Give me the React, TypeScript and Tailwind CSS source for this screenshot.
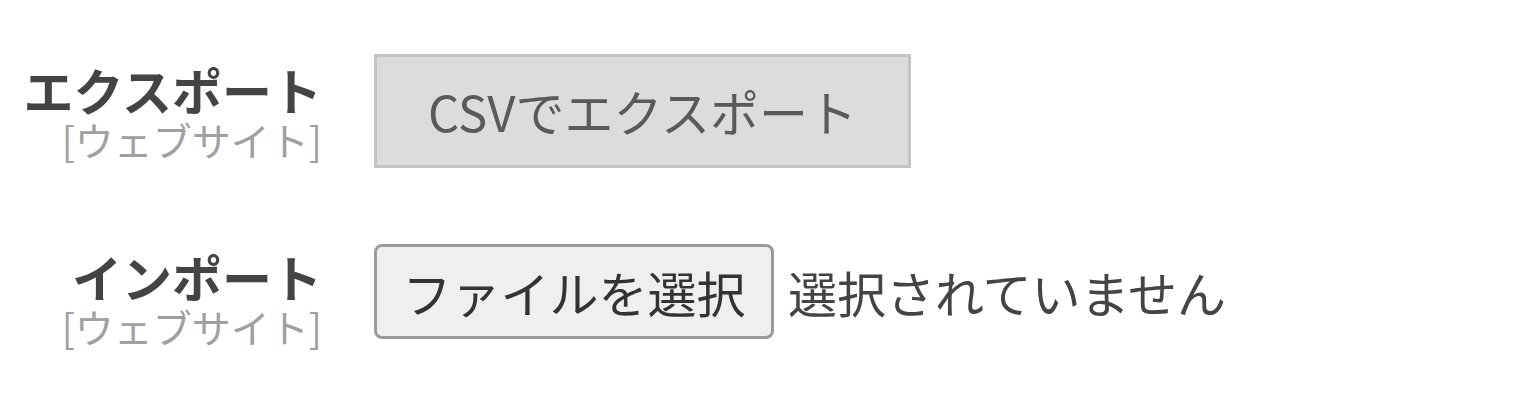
import React from 'react';

const font = { fontFamily: '"Noto Sans CJK JP", "Noto Sans", sans-serif' };

const FieldLabel: React.FC<{ title: string }> = ({ title }) => (
  <div className="w-[322px] shrink-0 text-right">
    <div className="text-[50px] font-bold leading-[52px] text-[#444]">{title}</div>
    <div className="mt-[4px] text-[39px] leading-[40px] text-[#a0a0a0]">[ウェブサイト]</div>
  </div>
);

export default function App() {
  return (
    <div className="min-h-[416px] bg-white pt-[54px]" style={font}>
      <div className="flex items-center">
        <FieldLabel title="エクスポート" />
        <button className="ml-[52px] h-[114px] w-[537px] border-[3px] border-[#c4c4c4] bg-[#dcdcdc] text-[49px] text-[#5a5a5a]">
          CSVでエクスポート
        </button>
      </div>

      <div className="mt-[76px] flex items-start">
        <div className="mt-[6px]">
          <FieldLabel title="インポート" />
        </div>
        <div className="ml-[52px] flex items-center">
          <button className="h-[95px] w-[400px] rounded-[8px] border-[3px] border-[#9a9a9a] bg-[#efefef] text-[49px] text-[#333]">
            ファイルを選択
          </button>
          <span className="ml-[14px] text-[49px] text-[#444]">選択されていません</span>
        </div>
      </div>
    </div>
  );
}
